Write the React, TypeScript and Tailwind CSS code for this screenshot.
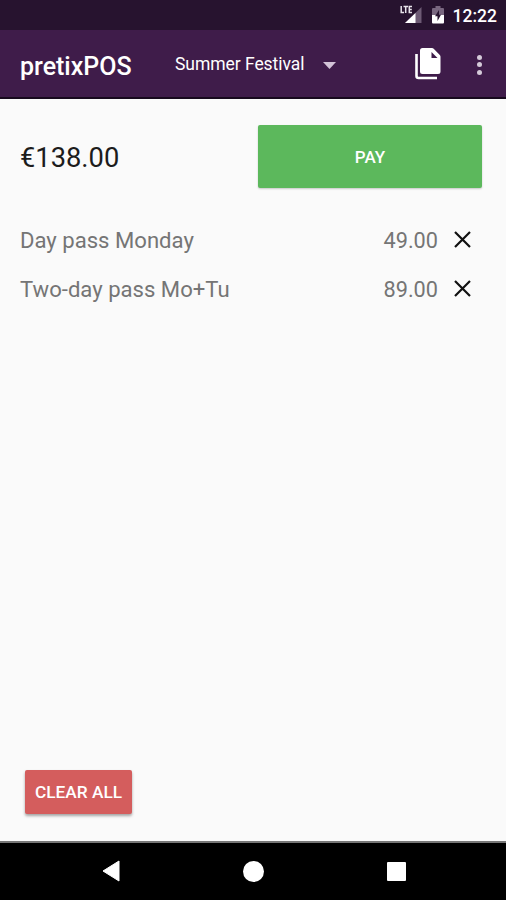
const items = [
  { name: 'Day pass Monday', price: '49.00' },
  { name: 'Two-day pass Mo+Tu', price: '89.00' },
];

function SignalIcon() {
  return (
    <svg width="22" height="20" viewBox="0 0 22 20">
      <path d="M21.500 2v16H5z" fill="#6d5a74" />
      <path d="M15.500 8v10H5z" fill="#fff" />
      <path
        d="M1.200 1v6.500h2.800M3.500 1.500h4.500M5.700 1.500v6.500M12 1.500H9.300v6H12M9.300 4.500h2.500"
        fill="none"
        stroke="#e8e3ea"
        strokeWidth="1.500"
      />
    </svg>
  );
}

function BatteryIcon() {
  return (
    <svg width="12" height="20" viewBox="0 0 12 20">
      <path d="M3.500 1h5v2H11q1 0 1 1v6H0V4q0-1 1-1h2.500z" fill="#796780" />
      <path d="M0 10h12v7.500q0 1-1 1H1q-1 0-1-1z" fill="#fff" />
      <path d="M7 5L3 11.200h2.500V16L9 9.800H7z" fill="#27132f" />
    </svg>
  );
}

function PagesIcon() {
  return (
    <svg width="26" height="32" viewBox="0 0 26 32">
      <path d="M1.500 6v22q0 2 2 2H22" fill="none" stroke="#fff" strokeWidth="2.600" />
      <path d="M7.500 0H17q1 0 1.700.7L24.800 7q.7.700.7 1.700V23.500q0 2.500-2.500 2.500H7.500Q5 26 5 23.500V2.500Q5 0 7.500 0z" fill="#fff" />
      <path d="M16.500 4v6h6z" fill="#3f1c4a" />
    </svg>
  );
}

function StatusBar() {
  return (
    <div className="flex h-[30px] shrink-0 items-center justify-end bg-[#27132f] pr-[9px] text-white">
      <SignalIcon />
      <div className="ml-[10px] flex">
        <BatteryIcon />
      </div>
      <span className="mt-[3px] ml-[9px] text-[17.500px] leading-none font-medium">12:22</span>
    </div>
  );
}

function Toolbar() {
  return (
    <div className="flex h-[69px] shrink-0 items-center border-b-2 border-[#17091d] bg-[#3f1c4a] pl-5 text-white">
      <h1 className="w-[155px] pt-[5px] text-[25px] leading-none font-medium">pretixPOS</h1>
      <button className="flex items-center pt-[3px] text-[17.500px] leading-none tracking-[-0.05px]">
        Summer Festival
        <svg className="ml-[19px]" width="13" height="7" viewBox="0 0 13 7">
          <path d="M0 0h13L6.500 7z" fill="#d3c3d8" />
        </svg>
      </button>
      <button className="mr-[36px] ml-auto">
        <PagesIcon />
      </button>
      <button className="mr-[24px] flex flex-col gap-[2.500px] pt-[2px]">
        <span className="size-[5px] rounded-full bg-[#d5cbd9]" />
        <span className="size-[5px] rounded-full bg-[#d5cbd9]" />
        <span className="size-[5px] rounded-full bg-[#d5cbd9]" />
      </button>
    </div>
  );
}

function NavBar() {
  return (
    <div className="flex h-[59px] shrink-0 items-center justify-between border-t-2 border-[#777] bg-black pr-[100px] pb-px pl-[102px]">
      <svg width="18" height="22" viewBox="0 0 18 22">
        <path d="M17 1v20L1 11z" fill="#fff" stroke="#fff" strokeLinejoin="round" />
      </svg>
      <span className="size-[21px] rounded-full bg-white" />
      <span className="size-[19px] rounded-[1px] bg-white" />
    </div>
  );
}

export default function App() {
  return (
    <div className="flex h-[900px] w-[506px] flex-col bg-[#fafafa] font-['Roboto',sans-serif]">
      <StatusBar />
      <Toolbar />

      <main className="flex flex-1 flex-col">
        <div className="mt-[26px] flex items-center justify-between pr-6 pl-5">
          <span className="pt-[5px] text-[27.300px] leading-none text-[#1c1c1c]">€138.00</span>
          <button className="h-[63px] w-[224px] rounded-[2px] bg-[#5cb85c] pt-[2px] text-[17px] font-medium text-white shadow-[0_1px_2px_rgba(0,0,0,0.2)]">
            PAY
          </button>
        </div>

        <ul className="mt-[27px]">
          {items.map((item) => (
            <li key={item.name} className="flex h-[49px] items-center pr-[35px] pl-5 text-[22.100px] text-[#757575]">
              <span className="flex-1 pt-[2px]">{item.name}</span>
              <span className="pt-[3px] text-[21.700px]">{item.price}</span>
              <svg className="ml-4" width="17" height="17" viewBox="0 0 17 17">
                <path d="M1 1l15 15M16 1L1 16" stroke="#111" strokeWidth="2.200" />
              </svg>
            </li>
          ))}
        </ul>

        <button className="mt-auto mb-[27px] ml-[25px] h-[44px] w-[107px] rounded-[2px] bg-[#d45d5d] pt-[2px] text-[17.300px] font-medium text-white shadow-[0_2px_3px_rgba(0,0,0,0.35)]">
          CLEAR ALL
        </button>
      </main>

      <NavBar />
    </div>
  );
}
